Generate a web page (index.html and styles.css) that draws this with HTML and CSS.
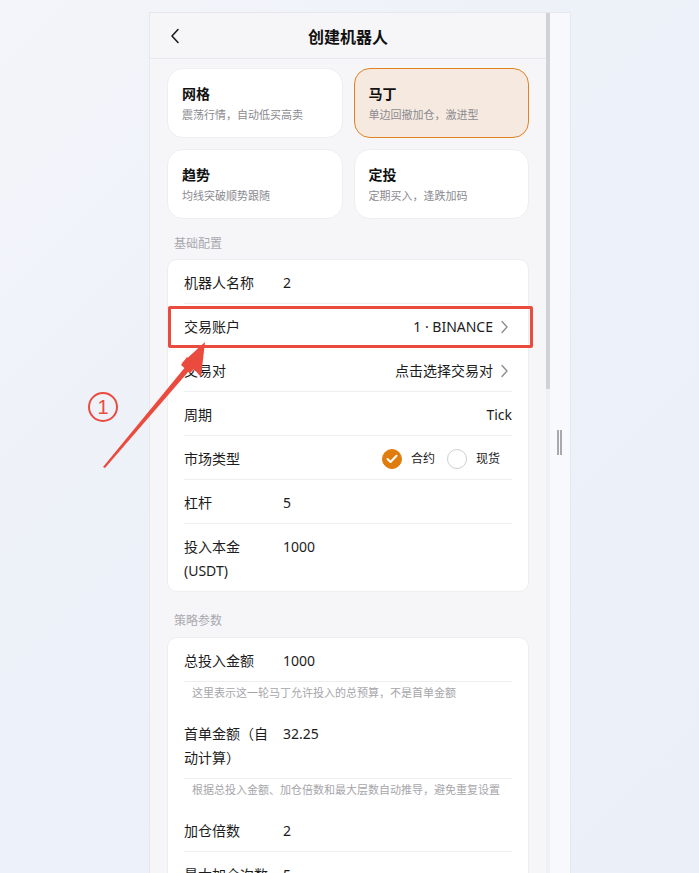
FILE: index.html
```html
<!DOCTYPE html>
<html lang="zh-CN">
<head>
<meta charset="UTF-8">
<meta name="viewport" content="width=device-width, initial-scale=1.0">
<title>创建机器人</title>
<link rel="stylesheet" href="styles.css">
</head>
<body>

<div class="frame">
  <div class="app">
    <div class="topbar">
      <svg class="back" width="10" height="16" viewBox="0 0 10 16"><path d="M8 1.5 L2 8 L8 14.5" fill="none" stroke="#1c1c1c" stroke-width="1.6" stroke-linecap="round" stroke-linejoin="round"/></svg>
      <h1>创建机器人</h1>
    </div>

    <div class="strategies">
      <div class="strategy">
        <div class="strategy-name">网格</div>
        <div class="strategy-desc">震荡行情，自动低买高卖</div>
      </div>
      <div class="strategy active">
        <div class="strategy-name">马丁</div>
        <div class="strategy-desc">单边回撤加仓，激进型</div>
      </div>
      <div class="strategy">
        <div class="strategy-name">趋势</div>
        <div class="strategy-desc">均线突破顺势跟随</div>
      </div>
      <div class="strategy">
        <div class="strategy-name">定投</div>
        <div class="strategy-desc">定期买入，逢跌加码</div>
      </div>
    </div>

    <div class="section-title">基础配置</div>
    <div class="form-card">
      <div class="row">
        <div class="label">机器人名称</div>
        <div class="value">2</div>
      </div>
      <div class="row">
        <div class="label">交易账户</div>
        <div class="value right">1 · BINANCE</div>
        <svg class="chev" width="9" height="14" viewBox="0 0 9 14"><path d="M2 1.5 L7 7 L2 12.5" fill="none" stroke="#8a8a8a" stroke-width="1.3" stroke-linecap="round" stroke-linejoin="round"/></svg>
      </div>
      <div class="row">
        <div class="label">交易对</div>
        <div class="value right">点击选择交易对</div>
        <svg class="chev" width="9" height="14" viewBox="0 0 9 14"><path d="M2 1.5 L7 7 L2 12.5" fill="none" stroke="#8a8a8a" stroke-width="1.3" stroke-linecap="round" stroke-linejoin="round"/></svg>
      </div>
      <div class="row">
        <div class="label">周期</div>
        <div class="value right">Tick</div>
      </div>
      <div class="row">
        <div class="label">市场类型</div>
        <div class="radios">
          <span class="radio checked">
            <svg width="12" height="10" viewBox="0 0 12 10"><path d="M1.5 5 L4.5 8 L10.5 1.8" fill="none" stroke="#fff" stroke-width="2" stroke-linecap="round" stroke-linejoin="round"/></svg>
          </span>
          <span class="radio-text">合约</span>
          <span class="radio"></span>
          <span class="radio-text">现货</span>
        </div>
      </div>
      <div class="row">
        <div class="label">杠杆</div>
        <div class="value">5</div>
      </div>
      <div class="row last">
        <div class="label">投入本金 (USDT)</div>
        <div class="value">1000</div>
      </div>
    </div>

    <div class="section-title second">策略参数</div>
    <div class="form-card">
      <div class="row">
        <div class="label">总投入金额</div>
        <div class="value">1000</div>
      </div>
      <div class="hint">这里表示这一轮马丁允许投入的总预算，不是首单金额</div>
      <div class="row">
        <div class="label">首单金额（自动计算）</div>
        <div class="value">32.25</div>
      </div>
      <div class="hint">根据总投入金额、加仓倍数和最大层数自动推导，避免重复设置</div>
      <div class="row">
        <div class="label">加仓倍数</div>
        <div class="value">2</div>
      </div>
      <div class="row">
        <div class="label">最大加仓次数</div>
        <div class="value">5</div>
      </div>
    </div>
  </div>

  <div class="scrollbar"><div class="thumb"></div></div>
  <div class="side">
    <div class="grip"></div>
  </div>
</div>

<!-- annotation drawn over the screenshot -->
<div class="mark-box"></div>
<div class="mark-num">1</div>
<svg class="mark-arrow" width="130" height="140" viewBox="0 0 130 140">
  <polygon points="2,137 90,30 94,34 4,138" fill="#ea4b3e"/>
  <polygon points="104,12 100,47 92,38 81,33" fill="#ea4b3e"/>
  <polygon points="86,27 96,36 89,43 80,35" fill="#ea4b3e"/>
</svg>

</body>
</html>
```

FILE: styles.css
```css
html, body {
  margin: 0;
  height: 100%;
  overflow: hidden;
}
body {
  font-family: "Noto Sans", "Noto Sans CJK SC", sans-serif;
  background: linear-gradient(135deg, #f3f5fa 0%, #edf1f8 40%, #ebeff8 100%);
  color: #1c1c1c;
  position: relative;
}
.frame {
  display: flex;
  width: 420px;
  height: 900px;
  margin: 13px 0 0 150px;
  box-shadow: 0 0 0 1px #e6e8ee;
}
.app {
  width: 396px;
  background: #f6f6f8;
}
.scrollbar {
  width: 4px;
  background: #f1f1f4;
}
.thumb {
  height: 376px;
  background: #d2d2d6;
}
.side {
  width: 20px;
  background: #f7f9fd;
  padding-top: 417px;
  box-sizing: border-box;
}
.grip {
  width: 5px;
  height: 25px;
  margin-left: 7px;
  border-left: 2px solid #a9a9ad;
  border-right: 2px solid #a9a9ad;
  box-sizing: border-box;
}

.topbar {
  height: 45px;
  border-bottom: 1px solid #e9e9ed;
  display: flex;
  align-items: center;
  justify-content: center;
  position: relative;
}
.topbar .back {
  position: absolute;
  left: 20px;
  top: 15px;
}
.topbar h1 {
  margin: 0;
  font-size: 16px;
  font-weight: 700;
  color: #111;
}

.strategies {
  display: grid;
  grid-template-columns: 1fr 1fr;
  gap: 11px;
  padding: 9px 17px 0;
}
.strategy {
  height: 70px;
  box-sizing: border-box;
  background: #fff;
  border: 1px solid #eeeef2;
  border-radius: 16px;
  padding: 15px 14px 0;
}
.strategy.active {
  background: #f6e9df;
  border-color: #e2821f;
}
.strategy-name {
  font-size: 14px;
  font-weight: 700;
  line-height: 20px;
  color: #111;
}
.strategy-desc {
  font-size: 11px;
  line-height: 16px;
  margin-top: 3px;
  color: #8a8a90;
}

.section-title {
  font-size: 12px;
  line-height: 17px;
  color: #a9a9af;
  margin: 16px 0 7px;
  padding-left: 24px;
}
.section-title.second {
  margin: 20px 0 8px;
}
.form-card {
  margin: 0 17px;
  background: #fff;
  border: 1px solid #eeeef2;
  border-radius: 10px;
  padding: 0 16px;
}
.row {
  display: flex;
  align-items: flex-start;
  padding: 11px 0 8px;
  border-bottom: 1px solid #eeeef1;
  font-size: 14px;
  line-height: 24px;
}
.row.last {
  border-bottom: none;
}
.label {
  flex: 0 0 88px;
  margin-right: 11px;
  color: #1c1c1c;
}
.value {
  flex: 1;
  color: #1c1c1c;
}
.value.right {
  text-align: right;
}
.chev {
  margin: 5px 3px 0 7px;
}
.hint {
  font-size: 11px;
  line-height: 18px;
  color: #a6a6ab;
  padding: 2px 0 9px 8px;
}

.radios {
  flex: 1;
  display: flex;
  justify-content: flex-end;
  align-items: center;
  height: 24px;
  padding-right: 12px;
}
.radio {
  width: 20px;
  height: 20px;
  border-radius: 50%;
  box-sizing: border-box;
  border: 1px solid #cfcfd3;
  display: flex;
  align-items: center;
  justify-content: center;
}
.radio.checked {
  background: #e07c0d;
  border-color: #e07c0d;
}
.radio-text {
  font-size: 12px;
  margin: 0 12px 0 9px;
}
.radio-text:last-child {
  margin-right: 0;
}

.mark-box {
  position: absolute;
  left: 168px;
  top: 306px;
  width: 359px;
  height: 36px;
  border: 3px solid #ea4b3e;
  border-radius: 2px;
}
.mark-num {
  position: absolute;
  left: 88px;
  top: 392px;
  width: 26px;
  height: 26px;
  border: 2px solid #ea4b3e;
  border-radius: 50%;
  text-align: center;
  font-size: 20px;
  line-height: 26px;
  color: #ea4b3e;
  font-family: "Liberation Sans", sans-serif;
}
.mark-arrow {
  position: absolute;
  left: 101px;
  top: 330px;
}
```
